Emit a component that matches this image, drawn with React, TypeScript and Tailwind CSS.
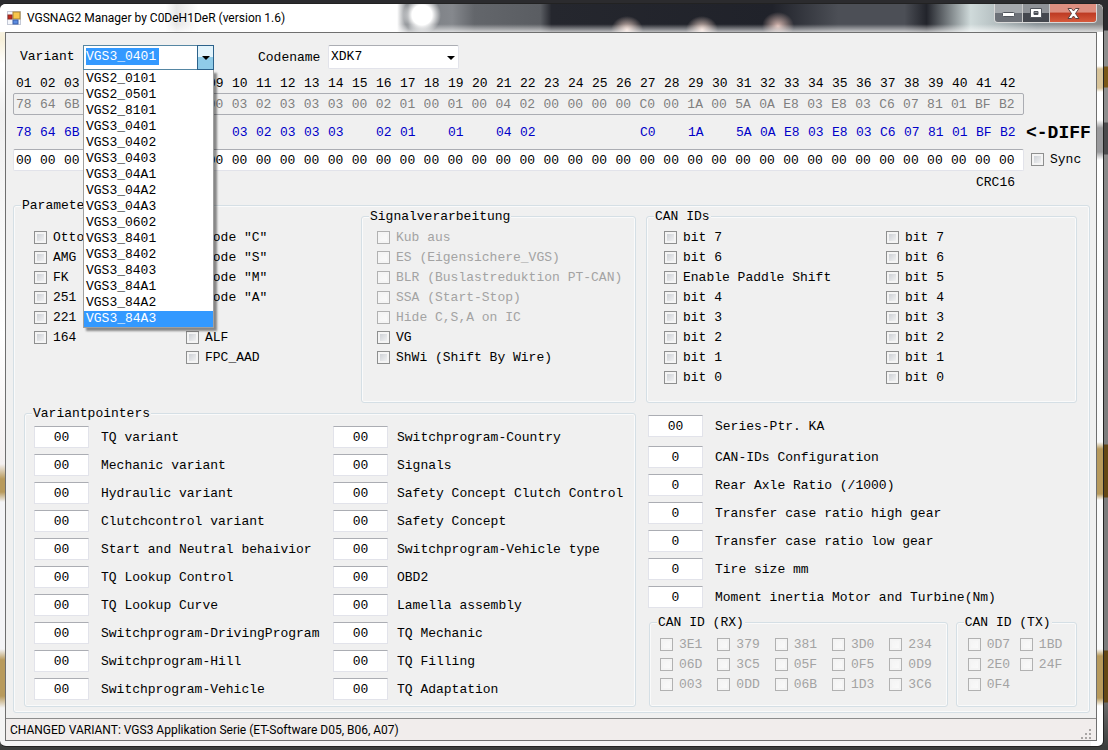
import { ReactNode, useState } from "react"

const variants = [
  "VGS2_0101", "VGS2_0501", "VGS2_8101", "VGS3_0401", "VGS3_0402", "VGS3_0403", "VGS3_04A1", "VGS3_04A2",
  "VGS3_04A3", "VGS3_0602", "VGS3_8401", "VGS3_8402", "VGS3_8403", "VGS3_84A1", "VGS3_84A2", "VGS3_84A3",
]

const columns = Array.from({ length: 42 }, (_, i) => String(i + 1).padStart(2, "0"))

const current =
  "78 64 6B 00 00 00 00 00 00 03 02 03 03 03 00 02 01 00 01 00 04 02 00 00 00 00 C0 00 1A 00 5A 0A E8 03 E8 03 C6 07 81 01 BF B2".split(" ")
const edited = columns.map(() => "00")

const pointersA = [
  "TQ variant", "Mechanic variant", "Hydraulic variant", "Clutchcontrol variant", "Start and Neutral behaivior",
  "TQ Lookup Control", "TQ Lookup Curve", "Switchprogram-DrivingProgram", "Switchprogram-Hill", "Switchprogram-Vehicle",
]
const pointersB = [
  "Switchprogram-Country", "Signals", "Safety Concept Clutch Control", "Safety Concept", "Switchprogram-Vehicle type",
  "OBD2", "Lamella assembly", "TQ Mechanic", "TQ Filling", "TQ Adaptation",
]
const values = [
  "CAN-IDs Configuration", "Rear Axle Ratio (/1000)", "Transfer case ratio high gear",
  "Transfer case ratio low gear", "Tire size mm", "Moment inertia Motor and Turbine(Nm)",
]
const bits = ["bit 7", "bit 6", "bit 5", "bit 4", "bit 3", "bit 2", "bit 1", "bit 0"]
const rx = ["3E1", "379", "381", "3D0", "234", "06D", "3C5", "05F", "0F5", "0D9", "003", "0DD", "06B", "1D3", "3C6"]
const tx = ["0D7", "1BD", "2E0", "24F", "0F4"]

const boxClass = "border border-[#e2e3ea] border-t-[#abadb3] bg-white"
const byteGrid = "grid grid-cols-[repeat(42,minmax(0,1fr))]"

function Check({ label, disabled = false }: { label: string; disabled?: boolean }) {
  return (
    <label className={`flex h-5 items-center gap-[6px] whitespace-nowrap ${disabled ? "text-[#a3a3a3]" : ""}`}>
      <input
        type="checkbox"
        disabled={disabled}
        className="size-[13px] shrink-0 appearance-none border border-[#8e8f8f] bg-linear-to-br from-[#c4c8ce] to-[#fafafa] shadow-[inset_0_0_0_2px_#f4f4f4] checked:bg-[#3399ff] disabled:border-[#b1b1b1] disabled:from-[#f3f3f3] disabled:to-[#fbfbfb]"
      />
      <span className="pt-[2px]">{label}</span>
    </label>
  )
}

function Group({ title, className, outer = "", children }: { title: string; className: string; outer?: string; children: ReactNode }) {
  return (
    <fieldset className={`min-w-0 rounded-[3px] border border-[#d5dfe5] shadow-[inset_0_0_0_1px_#fafafa] ${outer}`}>
      <legend className="ml-[7px] h-4 bg-[#f0f0f0] px-px leading-[18px]">{title}</legend>
      <div className={className}>{children}</div>
    </fieldset>
  )
}

function Field({ label, value = "00", wide = true }: { label: string; value?: string; wide?: boolean }) {
  return (
    <label className={`flex h-[22px] items-center whitespace-nowrap ${wide ? "gap-3" : "gap-[9px]"}`}>
      <input defaultValue={value} className={`h-[22px] w-[55px] shrink-0 text-center ${boxClass}`} />
      <span className="pt-[2px]">{label}</span>
    </label>
  )
}

function Bytes({ name, bytes, disabled = false }: { name: string; bytes: string[]; disabled?: boolean }) {
  return (
    <div
      role="group"
      aria-label={name}
      className={`h-[22px] rounded-[2px] pl-[2px] ${byteGrid} ${disabled ? "border border-[#abadb3] text-[#7f7f7f]" : boxClass}`}
    >
      {bytes.map((b, i) => (
        <input key={i} aria-label={`${name} ${columns[i]}`} disabled={disabled} defaultValue={b} maxLength={2} className="h-5 w-full min-w-0 outline-none" />
      ))}
    </div>
  )
}

function Arrow() {
  return (
    <svg width="8" height="4" viewBox="0 0 8 4" aria-hidden="true">
      <path d="M0 0h8L4 4z" fill="#000" />
    </svg>
  )
}

function TitleBar() {
  return (
    <header className="flex h-7 shrink-0 items-start justify-between rounded-t-[6px] bg-[linear-gradient(180deg,transparent_72%,#ffffffb0_100%),radial-gradient(circle_at_422px_11px,#fff_10px,transparent_19px),radial-gradient(ellipse_16px_14px_at_627px_26px,#f0d5ca,transparent),radial-gradient(ellipse_16px_14px_at_702px_26px,#f0d5ca,transparent),radial-gradient(ellipse_16px_14px_at_778px_22px,#d8b8b0,transparent),linear-gradient(90deg,#fff_0%,#fff_15%,#e6e6e6_16%,#fff_18%,#fff_36%,#777b80_37%,#85888d_41%,#63666b_43%,#5a5d62_49%,#25272e_50%,#20222a_70%,#4c4f56_76%,#4c4f56_82%,#22242b_84%,#cfdada_88%,#8b9499_94%,#8a8a8a_100%)] pl-[7px]">
      <div className="flex items-center gap-[6px] pt-[4px]">
        <svg width="14" height="14" viewBox="0 0 14 14" aria-hidden="true">
          <rect x="0.500" y="0.500" width="13" height="13" fill="#f4f6fb" stroke="#c4c9d6" />
          <rect x="6" y="1" width="7" height="7" fill="#f7c64b" stroke="#a98433" />
          <rect x="1" y="4" width="4" height="4" fill="#c5281c" stroke="#8c2a20" />
          <rect x="6" y="9" width="5" height="4" fill="#5a8be0" stroke="#3b5fa8" />
        </svg>
        <h1 className="font-[Roboto,'Noto_Sans',sans-serif] text-[12px] leading-5">
          VGSNAG2 Manager by C0DeH1DeR (version 1.6)
        </h1>
      </div>
      <div className="mr-[6px] flex h-[19px] overflow-hidden rounded-b-[4px] border border-t-0 border-[#d8d8d8]">
        <button aria-label="Minimize" className="grid w-[28px] place-items-center border-r border-[#c9c9c9] bg-linear-to-b from-[#a5a9ad] from-50% to-[#6c7077] to-50% pt-1">
          <svg width="13" height="6" viewBox="0 0 13 6"><rect x="0.500" y="0.500" width="12" height="4" rx="1" fill="#fff" stroke="#51555c" /></svg>
        </button>
        <button aria-label="Maximize" className="grid w-[27px] place-items-center border-r border-[#c9c9c9] bg-linear-to-b from-[#8f9297] from-50% to-[#44474e] to-50%">
          <svg width="12" height="10" viewBox="0 0 12 10"><path d="M.5.5h11v9H.5zM4 3.500v3h4v-3z" fillRule="evenodd" fill="#fff" stroke="#51555c" /></svg>
        </button>
        <button aria-label="Close" className="grid w-[46px] place-items-center bg-linear-to-b from-[#dd8f80] from-45% via-[#bd3a22] via-50% to-[#d65a3c]">
          <svg width="13" height="11" viewBox="0 0 13 11"><path d="M1 .5h3.500l2 2.500 2-2.500H12L8.500 5.500l3.500 5H8.500l-2-2.500-2 2.500H1l3.500-5z" fill="#fff" stroke="#5c4340" /></svg>
        </button>
      </div>
    </header>
  )
}

export default function App() {
  const [variant, setVariant] = useState("VGS3_0401")
  const [hovered, setHovered] = useState("VGS3_84A3")

  return (
    <div className="flex min-h-screen flex-col bg-[linear-gradient(180deg,#2b2b2e_0px,#2b2b2e_30px,#8e8e8e_31px,#8e8e8e_66px,#7a5718_67px,#7a5718_87px,#8e8e8e_88px,#8e8e8e_122px,#4a4a4c_123px,#4a4a4c_154px,#8a8a8a_155px,#7c7c7c_444px,#644715_445px,#644715_497px,#7c7c7c_498px,#7c7c7c_650px,#644715_651px,#644715_702px,#6a6a6a_703px,#3c3e3d_747px)] pt-[3px] pr-1 pb-[3px] font-['Liberation_Mono',monospace] text-[13px] leading-4 text-black">
      <div className="flex grow flex-col rounded-[6px] border border-l-0 border-[#222] bg-[linear-gradient(180deg,#fff_0px,#fff_62px,#d8c49a_65px,#d8c49a_84px,#fff_88px,#fff_116px,#9a9a9c_124px,#9a9a9c_148px,#fff_156px,#fafafa_438px,#b89a5c_445px,#b89a5c_490px,#fafafa_496px,#fafafa_645px,#b89a5c_652px,#b89a5c_694px,#fff_702px),linear-gradient(180deg,#fff_0px,#f6efd8_35px,#fff_60px,#f0f0f0_110px,#fff_330px,#f4f0f0_460px,#b89a5c_475px,#b89a5c_488px,#f4f4f6_498px,#f4f4f6_645px,#b89a5c_656px,#b89a5c_692px,#f4f4f4_704px)] bg-[length:12px_100%,100%_100%] bg-[position:right_top,left_top] bg-no-repeat pr-[6px] pb-[5px]">
        <div className="-mr-[6px]"><TitleBar /></div>
        <div className="ml-[5px] flex grow flex-col border border-[#6f6f6f] bg-[#f0f0f0]">
          <main className="grow pt-[12px] pl-[7px]">
            <div className="flex pl-[7px]">
              <label htmlFor="variant" className="w-[63px] pt-1">Variant</label>
              <div className="relative flex h-[25px] w-[131px] items-start border border-[#5586a3] bg-white pt-[2px] pl-[2px]">
                <input
                  id="variant"
                  role="combobox"
                  aria-expanded="true"
                  aria-controls="variants"
                  value={variant}
                  onChange={(e) => setVariant(e.target.value)}
                  className="h-[17px] w-[73px] bg-[#3399ff] text-white outline-none"
                />
                <button aria-label="Open" className="absolute -top-px -right-px grid h-[25px] w-[17px] place-items-center border border-[#2c628b] bg-linear-to-b from-[#e3f4fc] from-50% to-[#8fcbe8] to-50%">
                  <Arrow />
                </button>
                <ul
                  id="variants"
                  role="listbox"
                  className="absolute top-[24px] -left-px z-10 w-[131px] border border-t-0 border-[#a0a0a0] bg-white pt-px shadow-[3px_3px_2px_#00000070]"
                >
                  {variants.map((v) => (
                    <li
                      key={v}
                      role="option"
                      aria-selected={v === hovered}
                      onMouseEnter={() => setHovered(v)}
                      onClick={() => setVariant(v)}
                      className={`h-4 pl-[2px] ${v === hovered ? "bg-[#3399ff] text-white" : ""}`}
                    >
                      {v}
                    </li>
                  ))}
                </ul>
              </div>
              <label htmlFor="codename" className="ml-11 w-[70px] pt-[5px]">Codename</label>
              <div className="relative">
                <select id="codename" className={`h-[24px] w-[131px] appearance-none rounded-[2px] pl-[2px] ${boxClass}`}>
                  <option>XDK7</option>
                </select>
                <span className="pointer-events-none absolute top-[11px] right-[4px]"><Arrow /></span>
              </div>
            </div>

            <div className="mt-[6px] flex">
              <div className="min-w-0 flex-1">
                <div className={`h-[17px] pl-[3px] ${byteGrid}`}>
                  {columns.map((c) => <span key={c}>{c}</span>)}
                </div>
                <Bytes name="Current coding" bytes={current} disabled />
                <div className={`h-[34px] pt-[10px] pl-[3px] text-[#0000c8] ${byteGrid}`}>
                  {current.map((b, i) => <span key={i}>{b === edited[i] ? "" : b}</span>)}
                </div>
                <Bytes name="New coding" bytes={edited} />
                <div className="h-[26px] pt-1 pr-[9px] text-right">CRC16</div>
              </div>
              <div className="flex w-[72px] shrink-0 flex-col pt-[39px] whitespace-nowrap">
                <div className="h-[34px] pt-2 pl-[2px] text-[18px] leading-5 font-bold">&lt;-DIFF</div>
                <div className="pl-[7px]"><Check label="Sync" /></div>
              </div>
            </div>

            <Group title="Parameter" outer="mr-[6px]" className="pr-3 pb-[5px] pl-[10px]">
              <div className="-mt-[5px] grid grid-cols-[612fr_431fr] gap-x-[10px]">
                <div className="flex flex-col gap-[2px]">
                  <div className="grid grow grid-cols-[337fr_275fr]">
                    <div className="flex pt-[19px] pl-[10px]">
                      <div className="w-[152px]">
                        {["Otto", "AMG", "FK", "251", "221", "164"].map((l) => <Check key={l} label={l} />)}
                      </div>
                      <div>
                        {["C", "S", "M", "A"].map((l) => <Check key={l} label={`Mode "${l}"`} />)}
                        <div className="mt-5">
                          <Check label="ALF" />
                          <Check label="FPC_AAD" />
                        </div>
                      </div>
                    </div>
                    <Group title="Signalverarbeitung" className="pt-[3px] pl-[15px]">
                      {["Kub aus", "ES (Eigensichere_VGS)", "BLR (Buslastreduktion PT-CAN)", "SSA (Start-Stop)", "Hide C,S,A on IC"].map((l) => (
                        <Check key={l} label={l} disabled />
                      ))}
                      <Check label="VG" />
                      <Check label="ShWi (Shift By Wire)" />
                    </Group>
                  </div>
                  <Group title="Variantpointers" className="pt-[5px] pb-[6px] pl-[9px]">
                    <div className="grid grid-cols-[299fr_302fr]">
                      <div className="flex flex-col gap-[6px]">
                        {pointersA.map((l) => <Field key={l} label={l} />)}
                      </div>
                      <div className="flex flex-col gap-[6px]">
                        {pointersB.map((l) => <Field key={l} label={l} wide={false} />)}
                      </div>
                    </div>
                  </Group>
                </div>

                <div className="flex flex-col">
                  <Group title="CAN IDs" className="pt-[3px] pb-[15px] pl-[17px]">
                    <div className="grid grid-cols-[222fr_190fr]">
                      <div>
                        {bits.map((l) => <Check key={l} label={l === "bit 5" ? "Enable Paddle Shift" : l} />)}
                      </div>
                      <div>
                        {bits.map((l) => <Check key={l} label={l} />)}
                      </div>
                    </div>
                  </Group>
                  <div className="flex flex-col gap-[6px] pt-3 pb-[6px] pl-[2px]">
                    <div className="mb-[3px]"><Field label="Series-Ptr. KA" /></div>
                    {values.map((l) => <Field key={l} label={l} value="0" />)}
                  </div>
                  <div className="grid grid-cols-[298fr_121fr] gap-2 pl-[3px]">
                    <Group title="CAN ID (RX)" className="pt-1 pb-3 pl-[10px]">
                      <div className="grid grid-cols-5">
                        {rx.map((l) => <Check key={l} label={l} disabled />)}
                      </div>
                    </Group>
                    <Group title="CAN ID (TX)" className="pt-1 pr-1 pb-3 pl-[11px]">
                      <div className="grid grid-cols-2">
                        {tx.map((l) => <Check key={l} label={l} disabled />)}
                      </div>
                    </Group>
                  </div>
                </div>
              </div>
            </Group>
          </main>
          <footer className="flex h-[22px] items-center justify-between border-t border-[#8c8c8c] bg-[#f1edec] pr-1 pl-[4px] font-[Roboto,'Noto_Sans',sans-serif] text-[12px]">
            CHANGED VARIANT: VGS3 Applikation Serie (ET-Software D05, B06, A07)
            <svg width="11" height="11" viewBox="0 0 11 11" className="self-end" aria-hidden="true">
              <path d="M8 0h2v2H8zM4 4h2v2H4zM8 4h2v2H8zM0 8h2v2H0zM4 8h2v2H4zM8 8h2v2H8z" fill="#a8a5a4" />
            </svg>
          </footer>
        </div>
      </div>
    </div>
  )
}
